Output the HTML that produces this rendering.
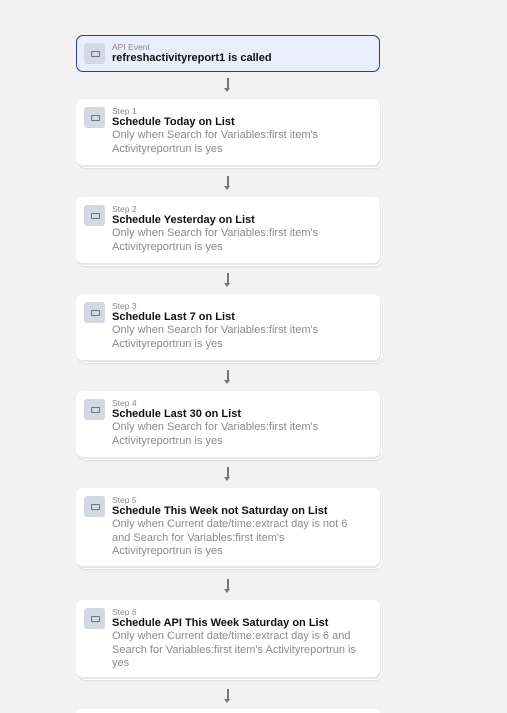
<!DOCTYPE html>
<html style="overflow:hidden"><head><style>
html,body{overflow:hidden}
body{margin:0;width:507px;height:713px;background:#f2f2f2;font-family:"Liberation Sans",sans-serif;position:relative;overflow:hidden}
.c{position:absolute;left:76px;width:304px;background:#fff;border-radius:7px;box-sizing:border-box;box-shadow:1px 2px 0 #e6e6e6,2px 3px 0 #fff,2px 4px 1px #dcdcdc}
.ic{position:absolute;left:8px;top:8px;width:21px;height:21px;background:#d3d9e3;border-radius:3px}
.ic:after{content:"";position:absolute;left:7px;top:8px;width:7px;height:4px;border:1px solid #6b7280;border-radius:1px}
.t{position:absolute;left:36px;top:7px;width:252px}
.l{font-size:8.5px;color:#888;line-height:10px}
.h{font-size:11px;font-weight:bold;color:#111;line-height:13px}
.d{font-size:11px;color:#8a8a8a;line-height:13.5px}
.a{position:absolute;left:227px;width:1.5px;height:12px;background:#777}
.a:after{content:"";position:absolute;left:-3px;top:10px;border-left:3.75px solid transparent;border-right:3.75px solid transparent;border-top:4px solid #777}
</style></head><body>
<div class="c" style="top:35px;height:37px;background:#e9eefc;border:1px solid #2a3a9e;box-shadow:none">
<div class="ic" style="top:7px;left:7px"></div><div class="t" style="top:6px;left:35px"><div class="l">API Event</div><div class="h">refreshactivityreport1 is called</div></div></div>
<div class="a" style="top:78px"></div>
<div class="c" style="top:99px;height:66px"><div class="ic"></div><div class="t"><div class="l">Step 1</div><div class="h">Schedule Today on List</div><div class="d">Only when Search for Variables:first item's Activityreportrun is yes</div></div></div>
<div class="a" style="top:176px"></div>
<div class="c" style="top:197px;height:66px"><div class="ic"></div><div class="t"><div class="l">Step 2</div><div class="h">Schedule Yesterday on List</div><div class="d">Only when Search for Variables:first item's Activityreportrun is yes</div></div></div>
<div class="a" style="top:273px"></div>
<div class="c" style="top:294px;height:66px"><div class="ic"></div><div class="t"><div class="l">Step 3</div><div class="h">Schedule Last 7 on List</div><div class="d">Only when Search for Variables:first item's Activityreportrun is yes</div></div></div>
<div class="a" style="top:370px"></div>
<div class="c" style="top:391px;height:66px"><div class="ic"></div><div class="t"><div class="l">Step 4</div><div class="h">Schedule Last 30 on List</div><div class="d">Only when Search for Variables:first item's Activityreportrun is yes</div></div></div>
<div class="a" style="top:467px"></div>
<div class="c" style="top:488px;height:78px"><div class="ic"></div><div class="t"><div class="l">Step 5</div><div class="h">Schedule This Week not Saturday on List</div><div class="d">Only when Current date/time:extract day is not 6<br>and Search for Variables:first item's<br>Activityreportrun is yes</div></div></div>
<div class="a" style="top:579px"></div>
<div class="c" style="top:600px;height:77px"><div class="ic"></div><div class="t"><div class="l">Step 6</div><div class="h">Schedule API This Week Saturday on List</div><div class="d">Only when Current date/time:extract day is 6 and<br>Search for Variables:first item's Activityreportrun is<br>yes</div></div></div>
<div class="a" style="top:689px"></div>
<div class="c" style="top:709px;height:4px;border-radius:7px 7px 0 0;box-shadow:none"></div>
</body></html>
